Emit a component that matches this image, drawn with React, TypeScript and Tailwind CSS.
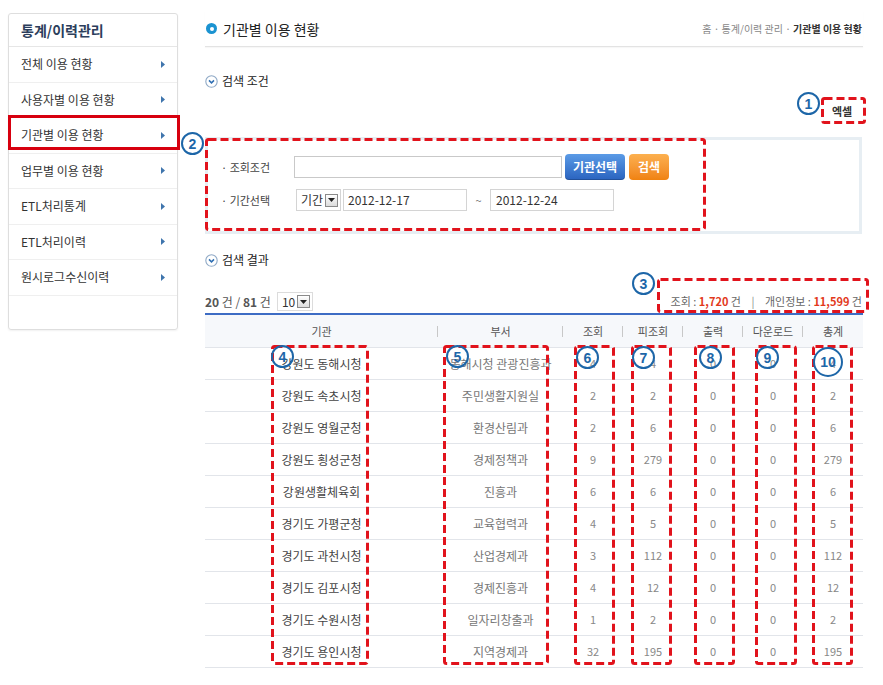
import React from "react";

const menu = [
  "전체 이용 현황",
  "사용자별 이용 현황",
  "기관별 이용 현황",
  "업무별 이용 현황",
  "ETL처리통계",
  "ETL처리이력",
  "원시로그수신이력",
];

const rows = [
  ["강원도 동해시청", "동해시청 관광진흥과", "4", "4", "0", "0", "4"],
  ["강원도 속초시청", "주민생활지원실", "2", "2", "0", "0", "2"],
  ["강원도 영월군청", "환경산림과", "2", "6", "0", "0", "6"],
  ["강원도 횡성군청", "경제정책과", "9", "279", "0", "0", "279"],
  ["강원생활체육회", "진흥과", "6", "6", "0", "0", "6"],
  ["경기도 가평군청", "교육협력과", "4", "5", "0", "0", "5"],
  ["경기도 과천시청", "산업경제과", "3", "112", "0", "0", "112"],
  ["경기도 김포시청", "경제진흥과", "4", "12", "0", "0", "12"],
  ["경기도 수원시청", "일자리창출과", "1", "2", "0", "0", "2"],
  ["경기도 용인시청", "지역경제과", "32", "195", "0", "0", "195"],
];

const heads = ["기관", "부서", "조회", "피조회", "출력", "다운로드", "총계"];
const widths = ["w-[233px]", "w-[125px]", "w-[60px]", "w-[60px]", "w-[60px]", "w-[60px]", "w-[60px]"];

function DashBox({ className, w, h }: { className: string; w: number; h: number }) {
  return (
    <svg className={"pointer-events-none absolute " + className} width={w} height={h}>
      <rect x="1.5" y="1.5" width={w - 3} height={h - 3} rx="2" fill="none" stroke="#e1131c" strokeWidth="3" strokeDasharray="8 4" />
    </svg>
  );
}

function Num({ className, n }: { className: string; n: string }) {
  return (
    <div
      className={
        "absolute flex items-center justify-center rounded-full border-[2.5px] border-[#1d66a8] font-['Liberation_Sans',sans-serif] font-bold leading-none text-[#1d66a8] " +
        className
      }
    >
      {n}
    </div>
  );
}

function SectionIcon() {
  return (
    <svg width="13" height="13" viewBox="0 0 13 13">
      <circle cx="6.5" cy="6.5" r="5.7" fill="#fff" stroke="#8fa9c6" strokeWidth="1.1" />
      <path d="M4 5.4 L6.5 7.9 L9 5.4" fill="none" stroke="#2f6fb3" strokeWidth="1.5" />
    </svg>
  );
}

function SelectArrow() {
  return (
    <span className="flex h-[13px] w-[13px] items-center justify-center border border-[#8a8a8a] bg-gradient-to-b from-white to-[#dcdcdc]">
      <svg width="7" height="4" viewBox="0 0 7 4">
        <path d="M0 0 H7 L3.5 4 Z" fill="#222" />
      </svg>
    </span>
  );
}

export default function App() {
  return (
    <div className="relative h-[685px] w-[883px] overflow-hidden bg-white font-['Noto_Sans_CJK_KR',sans-serif] text-[12px] text-[#333]">
      <div className="flex">
        {/* SIDEBAR */}
        <aside className="ml-[8px] mt-[13px] h-[317px] w-[170px] rounded-[3px] border border-[#dedede] shadow-[0_1px_2px_rgba(0,0,0,0.06)]">
          <div className="flex h-[33px] items-center border-b border-[#e6e6e6] pl-[12px] text-[14px] font-bold leading-none text-[#2c3e5c]">
            통계/이력관리
          </div>
          {menu.map((item) => (
            <div key={item} className="flex h-[35.5px] items-center justify-between border-b border-[#efefef] pl-[12px] pr-[12px] text-[12px] leading-none text-[#333]">
              <span>{item}</span>
              <svg width="4" height="7" viewBox="0 0 4 7">
                <path d="M0 0 L4 3.5 L0 7 Z" fill="#3f75ad" />
              </svg>
            </div>
          ))}
        </aside>

        {/* MAIN */}
        <main className="ml-[27px] w-[658px]">
          <div className="mt-[11px] flex h-[36px] items-center justify-between border-b border-[#e3e3e3] shadow-[0_1px_1px_rgba(0,0,0,0.03)]">
            <div className="flex items-center gap-[6px] pl-[1px]">
              <span className="flex h-[11px] w-[11px] items-center justify-center rounded-full bg-[#1b93d1]">
                <span className="h-[4px] w-[4px] rounded-full bg-white" />
              </span>
              <span className="text-[14px] leading-none text-[#222]">기관별 이용 현황</span>
            </div>
            <div className="pr-[1px] text-[10px] leading-none text-[#888]">
              홈 · 통계/이력 관리 · <span className="font-bold text-[#333]">기관별 이용 현황</span>
            </div>
          </div>

          <div className="mt-[26px] flex h-[16px] items-center gap-[4px]">
            <SectionIcon />
            <span className="text-[12px] leading-none text-[#222]">검색 조건</span>
          </div>

          <div className="mt-[12px] flex h-[20px] justify-end pr-[4px]">
            <button className="h-[20px] w-[34px] rounded-[2px] bg-white text-[11px] font-bold leading-none text-[#333]">엑셀</button>
          </div>

          <div className="mt-[16px] h-[97px] w-[657px] border-[3px] border-[#e7eef3] bg-white pl-[13px]">
            <div className="mt-[14px] flex h-[26px] items-center">
              <span className="w-[73px] text-[11px] leading-none text-[#444]">· 조회조건</span>
              <input className="h-[22px] w-[268px] border border-[#c9c9c9] bg-white outline-none" />
              <button className="ml-[3px] h-[26px] w-[60px] rounded-[4px] bg-gradient-to-b from-[#5b9be6] to-[#2a63bf] text-[12px] font-bold leading-none text-white shadow-[inset_0_-1px_0_rgba(0,0,0,0.2)]">
                기관선택
              </button>
              <button className="ml-[4px] h-[26px] w-[40px] rounded-[4px] bg-gradient-to-b from-[#fcb04e] to-[#f0820e] text-[12px] font-bold leading-none text-white">
                검색
              </button>
            </div>
            <div className="mt-[9px] flex h-[22px] items-center">
              <span className="w-[75px] text-[11px] leading-none text-[#444]">· 기간선택</span>
              <span className="flex h-[22px] w-[45px] items-center justify-between border border-[#d4d4d4] bg-white pl-[4px] pr-[2px] text-[12px] leading-none">
                기간
                <SelectArrow />
              </span>
              <span className="ml-[2px] flex h-[22px] w-[124px] items-center border border-[#d4d4d4] pl-[4px] text-[12px] leading-none text-[#333]">
                2012-12-17
              </span>
              <span className="w-[23px] text-center text-[11px] leading-none text-[#777]">~</span>
              <span className="flex h-[22px] w-[124px] items-center border border-[#d4d4d4] pl-[5px] text-[12px] leading-none text-[#333]">
                2012-12-24
              </span>
            </div>
          </div>

          <div className="mt-[18px] flex h-[16px] items-center gap-[4px]">
            <SectionIcon />
            <span className="text-[12px] leading-none text-[#222]">검색 결과</span>
          </div>

          <div className="mt-[22px] flex h-[23px] items-center justify-between">
            <div className="flex items-center text-[12px] leading-none text-[#555]">
              <span className="font-bold">20</span>&nbsp;건 /&nbsp;<span className="font-bold">81</span>&nbsp;건
              <span className="ml-[6px] flex h-[19px] w-[36px] items-center justify-between border border-[#dcdcdc] pl-[4px] pr-[2px] text-[12px] leading-none text-[#333]">
                10
                <SelectArrow />
              </span>
            </div>
            <div className="pr-[1px] text-[11px] leading-none text-[#666]">
              조회 : <span className="font-bold text-[#e2391c]">1,720</span> 건 <span className="mx-[8px] text-[#888]">|</span> 개인정보 :{" "}
              <span className="font-bold text-[#e2391c]">11,599</span> 건
            </div>
          </div>

          <div className="h-[2px] w-[658px] bg-[#3d6cc4]" />
          <div className="flex h-[32px] w-[658px] bg-[#f6f8fb]">
            {heads.map((h, i) => (
              <div key={h} className={"relative flex items-center justify-center text-[11px] leading-none text-[#555] " + widths[i]}>
                {h}
                {i < 6 && <span className="absolute right-0 top-[11px] h-[11px] w-px bg-[#c8c8c8]" />}
              </div>
            ))}
          </div>
          {rows.map((r) => (
            <div key={r[0]} className="flex h-[32px] w-[658px] border-t border-[#e2e5ea]">
              {r.map((c, i) => (
                <div
                  key={i}
                  className={
                    "flex items-center justify-center leading-none " +
                    widths[i] +
                    (i === 0 ? " text-[12px] text-[#444]" : i === 1 ? " text-[12px] text-[#777]" : " text-[11px] text-[#888]")
                  }
                >
                  {c}
                </div>
              ))}
            </div>
          ))}
          <div className="h-px w-[658px] bg-[#e2e5ea]" />
        </main>
      </div>

      {/* ANNOTATIONS */}
      <div className="pointer-events-none absolute left-[8px] top-[115px] h-[35px] w-[172px] border-[3px] border-[#d7000f]" />
      <DashBox className="left-[821px] top-[97px]" w={45} h={27} />
      <DashBox className="left-[205px] top-[138px]" w={501} h={93} />
      <DashBox className="left-[657px] top-[278px]" w={212} h={35} />
      <DashBox className="left-[271px] top-[345px]" w={98} h={320} />
      <DashBox className="left-[443px] top-[345px]" w={106} h={320} />
      <DashBox className="left-[574px] top-[345px]" w={41} h={320} />
      <DashBox className="left-[631px] top-[345px]" w={41} h={320} />
      <DashBox className="left-[694px] top-[345px]" w={41} h={320} />
      <DashBox className="left-[755px] top-[345px]" w={42} h={320} />
      <DashBox className="left-[812px] top-[345px]" w={41} h={320} />

      <Num className="left-[797px] top-[92px] h-[23px] w-[23px] text-[14px]" n="1" />
      <Num className="left-[181px] top-[132px] h-[23px] w-[23px] text-[14px]" n="2" />
      <Num className="left-[632px] top-[272px] h-[23px] w-[23px] text-[14px]" n="3" />
      <Num className="left-[271px] top-[345px] h-[23px] w-[23px] text-[14px]" n="4" />
      <Num className="left-[446px] top-[345px] h-[23px] w-[23px] text-[14px]" n="5" />
      <Num className="left-[576px] top-[346px] h-[23px] w-[23px] text-[14px]" n="6" />
      <Num className="left-[632px] top-[346px] h-[23px] w-[23px] text-[14px]" n="7" />
      <Num className="left-[699px] top-[346px] h-[23px] w-[23px] text-[14px]" n="8" />
      <Num className="left-[756px] top-[346px] h-[23px] w-[23px] text-[14px]" n="9" />
      <Num className="left-[813px] top-[347px] h-[30px] w-[30px] text-[14px]" n="10" />
    </div>
  );
}
